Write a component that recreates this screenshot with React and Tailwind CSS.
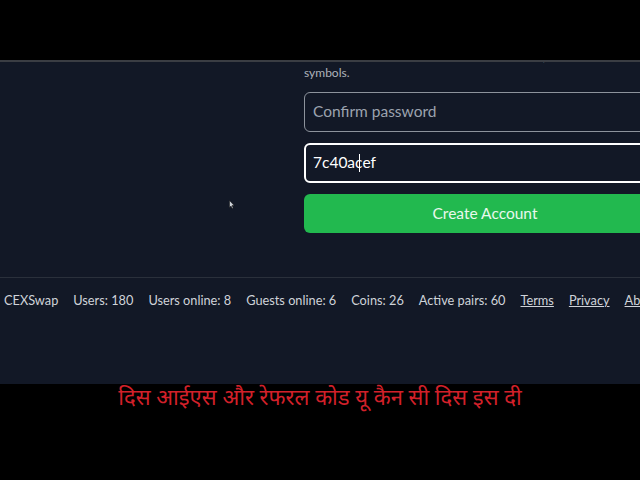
import React from 'react';

const stats = [
    'Users: 180',
    'Users online: 8',
    'Guests online: 6',
    'Coins: 26',
    'Active pairs: 60',
];

const App = () => {
    return (
        <div
            className="w-[640px] h-[480px] bg-black flex flex-col overflow-hidden relative"
            style={{ fontFamily: 'Lato, "Open Sans", sans-serif' }}
        >
            <div className="h-[60px] shrink-0 bg-black" />
            <div className="h-[2px] shrink-0 bg-[#3a3d43]" />

            <div className="h-[322px] shrink-0 bg-[#121826] flex flex-col overflow-hidden">
                <div className="h-[215px] shrink-0 flex overflow-hidden">
                    <div className="w-[304px] shrink-0" />
                    <div className="w-[362px] shrink-0 -mt-[13px] flex flex-col">
                        <p className="text-[12px] leading-[16px] text-[#aeb3bb] whitespace-nowrap">
                            Use 8 or more characters with a mix of letters, numbers and
                        </p>
                        <p className="text-[12px] leading-[16px] text-[#aeb3bb]">symbols.</p>
                        <div className="mt-[11px] h-[40px] rounded-md border border-[#8d939c] flex items-center px-2">
                            <span className="text-[15.5px] text-[#9ca3af]">Confirm password</span>
                        </div>
                        <div className="mt-[11px] h-[40px] rounded-md border-2 border-white flex items-center px-[7px]">
                            <span className="text-[15.5px] text-white">7c40ac</span>
                            <span className="w-px h-[18px] bg-white -ml-[3px] mr-[2px]" />
                            <span className="text-[15.5px] text-white">ef</span>
                        </div>
                        <button className="mt-[11px] h-[39px] rounded-md bg-[#22b94f] text-[15.5px] text-[#e8f8ec]">
                            Create Account
                        </button>
                    </div>
                </div>

                <footer className="border-t border-[#2a303b] pt-[13px] flex items-center gap-[15px] px-1 text-[12.75px] leading-[18px] text-[#cfd3d9] whitespace-nowrap">
                    <span>CEXSwap</span>
                    {stats.map(s => (
                        <span key={s}>{s}</span>
                    ))}
                    <span className="underline">Terms</span>
                    <span className="underline">Privacy</span>
                    <span className="underline">About</span>
                </footer>
            </div>

            <div className="flex-1 bg-black flex justify-center pt-[1px]">
                <p
                    className="text-[22px] leading-[30px] text-[#d3202a]"
                    style={{ fontFamily: '"Noto Sans Devanagari", "Lohit Devanagari", "Noto Sans", sans-serif' }}
                >
                    दिस आईएस और रेफरल कोड यू कैन सी दिस इस दी
                </p>
            </div>

            <svg className="absolute left-[229px] top-[200px]" width="6" height="9" viewBox="0 0 6 9">
                <path d="M0.5 0.5 L0.5 7.5 L2 6 L3.2 8.5 L4.2 8 L3 5.5 L5.2 5.5 Z" fill="#cfd3d9" stroke="#111" strokeWidth="0.5" />
            </svg>
        </div>
    );
};

export default App;
